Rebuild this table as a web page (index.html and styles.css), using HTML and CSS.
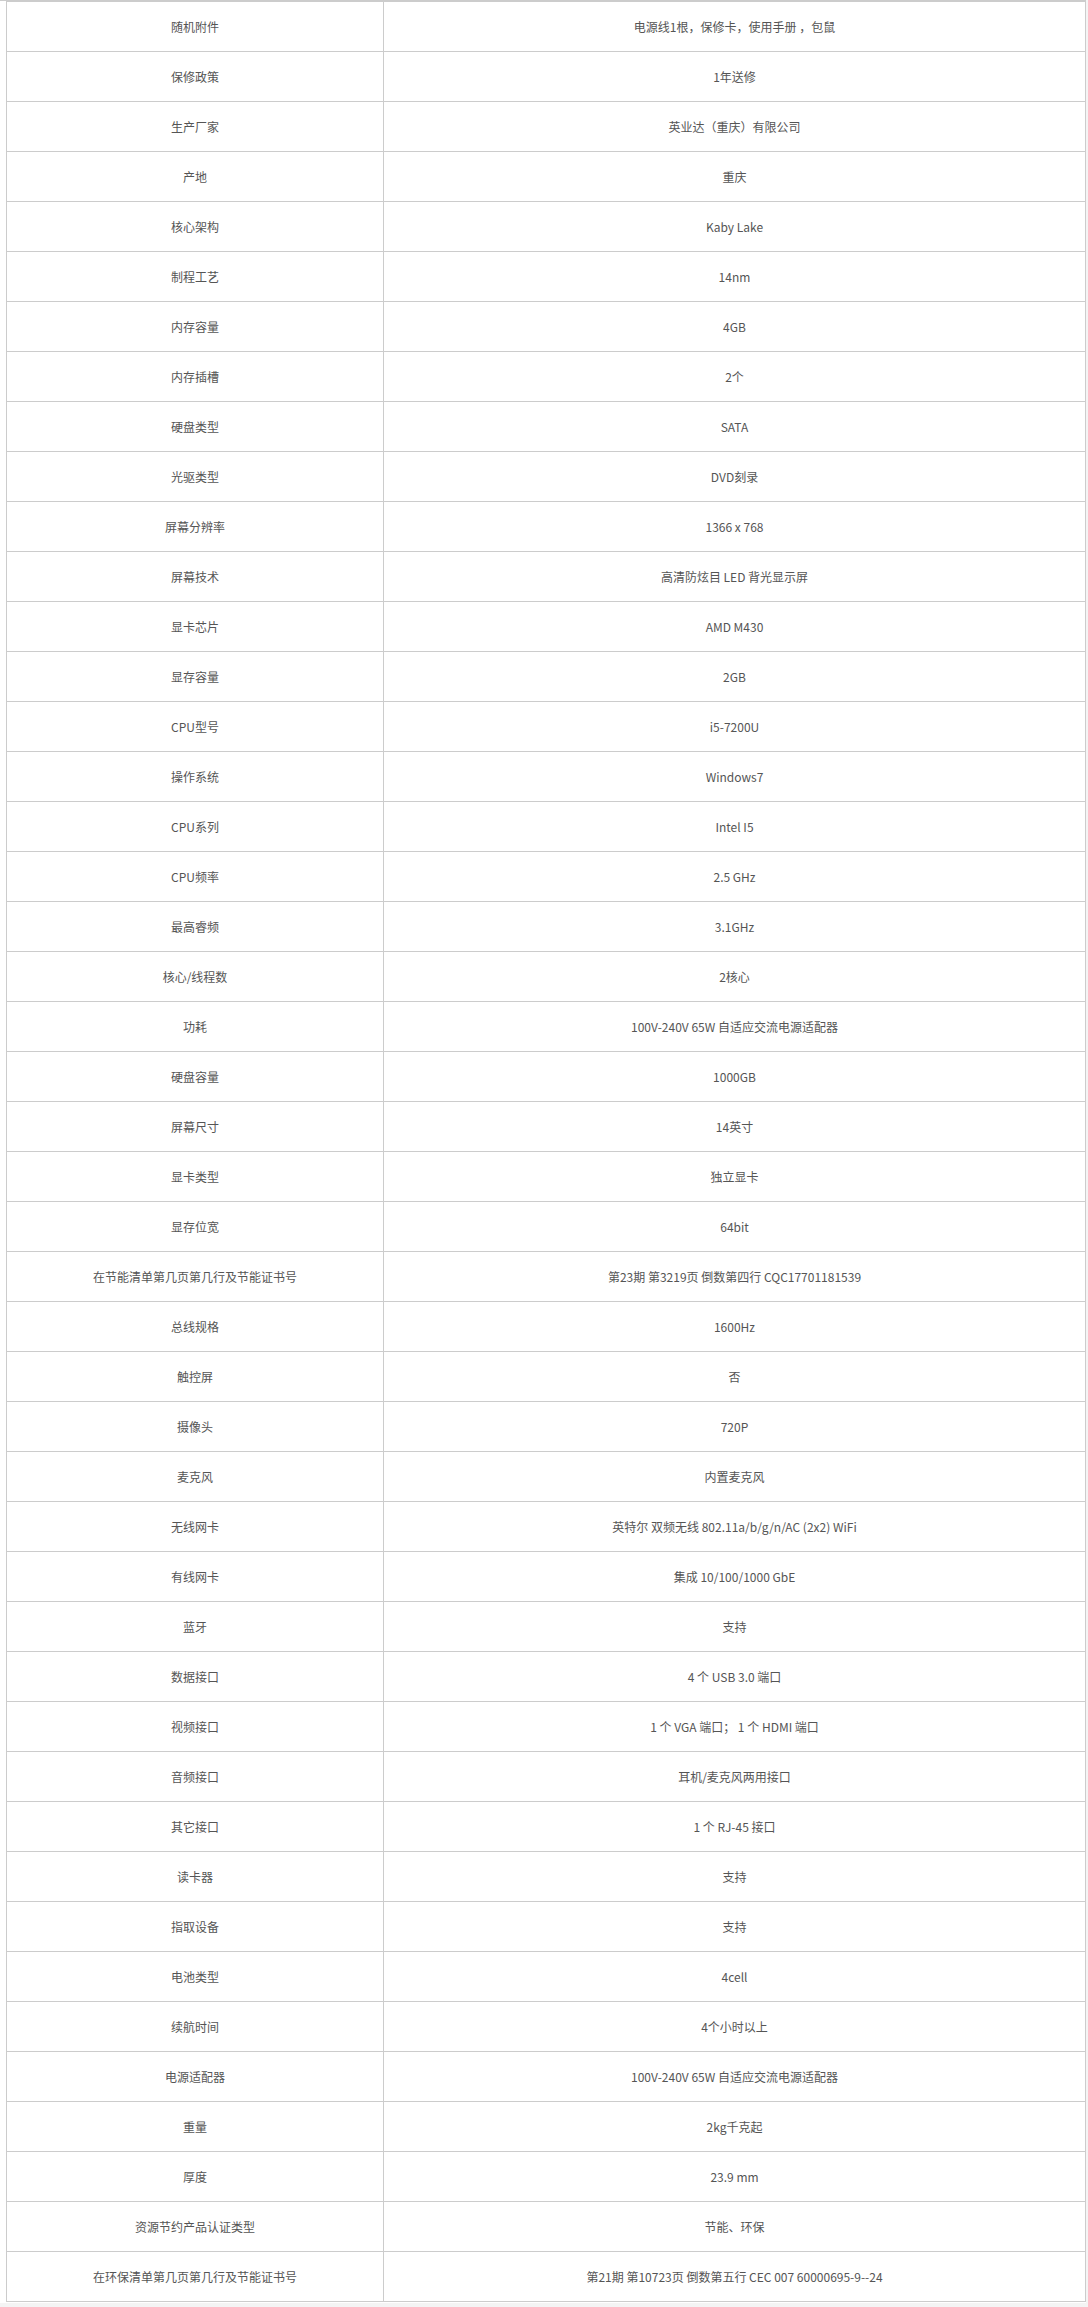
FILE: index.html
```html
<!DOCTYPE html>
<html lang="zh-CN">
<head>
<meta charset="utf-8">
<title>规格参数</title>
<link rel="stylesheet" href="styles.css">
</head>
<body>
<div class="frame">
<table class="spec">
<colgroup><col class="c1"><col class="c2"></colgroup>
<tbody>
<tr><td>随机附件</td><td>电源线1根，保修卡，使用手册 ，包鼠</td></tr>
<tr><td>保修政策</td><td>1年送修</td></tr>
<tr><td>生产厂家</td><td>英业达（重庆）有限公司</td></tr>
<tr><td>产地</td><td>重庆</td></tr>
<tr><td>核心架构</td><td>Kaby Lake</td></tr>
<tr><td>制程工艺</td><td>14nm</td></tr>
<tr><td>内存容量</td><td>4GB</td></tr>
<tr><td>内存插槽</td><td>2个</td></tr>
<tr><td>硬盘类型</td><td>SATA</td></tr>
<tr><td>光驱类型</td><td>DVD刻录</td></tr>
<tr><td>屏幕分辨率</td><td>1366 x 768</td></tr>
<tr><td>屏幕技术</td><td>高清防炫目 LED 背光显示屏</td></tr>
<tr><td>显卡芯片</td><td>AMD M430</td></tr>
<tr><td>显存容量</td><td>2GB</td></tr>
<tr><td>CPU型号</td><td>i5-7200U</td></tr>
<tr><td>操作系统</td><td>Windows7</td></tr>
<tr><td>CPU系列</td><td>Intel I5</td></tr>
<tr><td>CPU频率</td><td>2.5 GHz</td></tr>
<tr><td>最高睿频</td><td>3.1GHz</td></tr>
<tr><td>核心/线程数</td><td>2核心</td></tr>
<tr><td>功耗</td><td>100V-240V 65W 自适应交流电源适配器</td></tr>
<tr><td>硬盘容量</td><td>1000GB</td></tr>
<tr><td>屏幕尺寸</td><td>14英寸</td></tr>
<tr><td>显卡类型</td><td>独立显卡</td></tr>
<tr><td>显存位宽</td><td>64bit</td></tr>
<tr><td>在节能清单第几页第几行及节能证书号</td><td>第23期 第3219页 倒数第四行 CQC17701181539</td></tr>
<tr><td>总线规格</td><td>1600Hz</td></tr>
<tr><td>触控屏</td><td>否</td></tr>
<tr><td>摄像头</td><td>720P</td></tr>
<tr><td>麦克风</td><td>内置麦克风</td></tr>
<tr><td>无线网卡</td><td>英特尔 双频无线 802.11a/b/g/n/AC (2x2) WiFi</td></tr>
<tr><td>有线网卡</td><td>集成 10/100/1000 GbE</td></tr>
<tr><td>蓝牙</td><td>支持</td></tr>
<tr><td>数据接口</td><td>4 个 USB 3.0 端口</td></tr>
<tr><td>视频接口</td><td>1 个 VGA 端口； 1 个 HDMI 端口</td></tr>
<tr><td>音频接口</td><td>耳机/麦克风两用接口</td></tr>
<tr><td>其它接口</td><td>1 个 RJ-45 接口</td></tr>
<tr><td>读卡器</td><td>支持</td></tr>
<tr><td>指取设备</td><td>支持</td></tr>
<tr><td>电池类型</td><td>4cell</td></tr>
<tr><td>续航时间</td><td>4个小时以上</td></tr>
<tr><td>电源适配器</td><td>100V-240V 65W 自适应交流电源适配器</td></tr>
<tr><td>重量</td><td>2kg千克起</td></tr>
<tr><td>厚度</td><td>23.9 mm</td></tr>
<tr><td>资源节约产品认证类型</td><td>节能、环保</td></tr>
<tr><td>在环保清单第几页第几行及节能证书号</td><td>第21期 第10723页 倒数第五行 CEC 007 60000695-9--24</td></tr>
</tbody>
</table>
</div>
</body>
</html>
```

FILE: styles.css
```css
html, body {
  margin: 0;
  padding: 0;
  background: #f4f4f4;
}
.frame {
  width: 1086px;
  background: #ffffff;
  border-top: 1px solid #cccccc;
  padding-left: 6px;
  box-sizing: border-box;
  padding-bottom: 1px;
}
.spec {
  width: 1080px;
  border-collapse: collapse;
  table-layout: fixed;
  font-family: "Noto Sans CJK SC", "Microsoft YaHei", sans-serif;
  font-size: 12px;
  color: #555555;
}
.spec .c1 { width: 377px; }
.spec td {
  border: 1px solid #cccccc;
  height: 49px;
  padding: 0 4px;
  box-sizing: border-box;
  text-align: center;
  vertical-align: middle;
  line-height: 16px;
}
.spec tr { height: 50px; }
```
